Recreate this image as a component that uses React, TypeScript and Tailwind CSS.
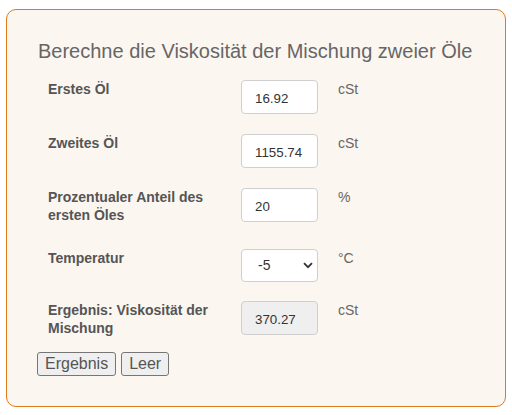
import React from 'react';

const font = { fontFamily: '"Liberation Sans", Arial, sans-serif' };

interface RowProps {
  label: string;
  unit: string;
  height: string;
  children: React.ReactNode;
}

function Row({ label, unit, height, children }: RowProps) {
  return (
    <div className={`flex items-start ml-[11px] ${height}`}>
      <div className="w-[193px] pr-[20px] text-[14px] leading-[18px] font-bold text-[#555]">
        {label}
      </div>
      {children}
      <div className="ml-[20px] text-[14px] leading-[18px] text-[#666]">{unit}</div>
    </div>
  );
}

function NumberBox({ value, readOnly }: { value: string; readOnly?: boolean }) {
  return (
    <input
      type="text"
      defaultValue={value}
      readOnly={readOnly}
      className={`w-[77px] h-[34px] border border-[#cfcfcf] rounded-[4px] pl-[13px] pt-[2px] text-[13.33px] text-[#333] outline-none ${
        readOnly ? 'bg-[#efefef]' : 'bg-white'
      }`}
      style={font}
    />
  );
}

export default function App() {
  return (
    <div className="w-[512px] h-[415px] bg-white pt-[9px] pl-[6px]" style={font}>
      <div className="w-[500px] h-[398px] border border-[#e07b1a] rounded-[10px] bg-[#fcf6f0] pt-[29px] pl-[30px]">
        <h2 className="ml-[1px] text-[20px] leading-[24px] text-[#666]">
          Berechne die Viskosität der Mischung zweier Öle
        </h2>
        <div className="mt-[17px]">
          <Row label="Erstes Öl" unit="cSt" height="h-[54px]">
            <NumberBox value="16.92" />
          </Row>
          <Row label="Zweites Öl" unit="cSt" height="h-[54px]">
            <NumberBox value="1155.74" />
          </Row>
          <Row label="Prozentualer Anteil des ersten Öles" unit="%" height="h-[61px]">
            <NumberBox value="20" />
          </Row>
          <Row label="Temperatur" unit="°C" height="h-[52px]">
            <div className="relative w-[77px] h-[33px]">
              <select
                defaultValue="-5"
                className="appearance-none w-full h-full border border-[#cfcfcf] rounded-[4px] bg-white pl-[16px] text-[14px] text-[#333] outline-none"
                style={font}
              >
                <option value="-5">-5</option>
                <option value="0">0</option>
                <option value="5">5</option>
              </select>
              <svg
                className="absolute right-[5px] top-[13px] pointer-events-none"
                width="10"
                height="7"
                viewBox="0 0 10 7"
              >
                <path d="M1 1.2 L5 5.2 L9 1.2" fill="none" stroke="#333" strokeWidth="1.8" />
              </svg>
            </div>
          </Row>
          <Row label="Ergebnis: Viskosität der Mischung" unit="cSt" height="h-[51px]">
            <NumberBox value="370.27" readOnly />
          </Row>
        </div>
        <div className="flex gap-[5px]">
          <button
            className="h-[24px] px-[7px] border border-[#767676] rounded-[3px] bg-[#efefef] text-[16px] leading-[18px] text-[#555]"
            style={font}
          >
            Ergebnis
          </button>
          <button
            className="h-[24px] px-[7px] border border-[#767676] rounded-[3px] bg-[#efefef] text-[16px] leading-[18px] text-[#555]"
            style={font}
          >
            Leer
          </button>
        </div>
      </div>
    </div>
  );
}
